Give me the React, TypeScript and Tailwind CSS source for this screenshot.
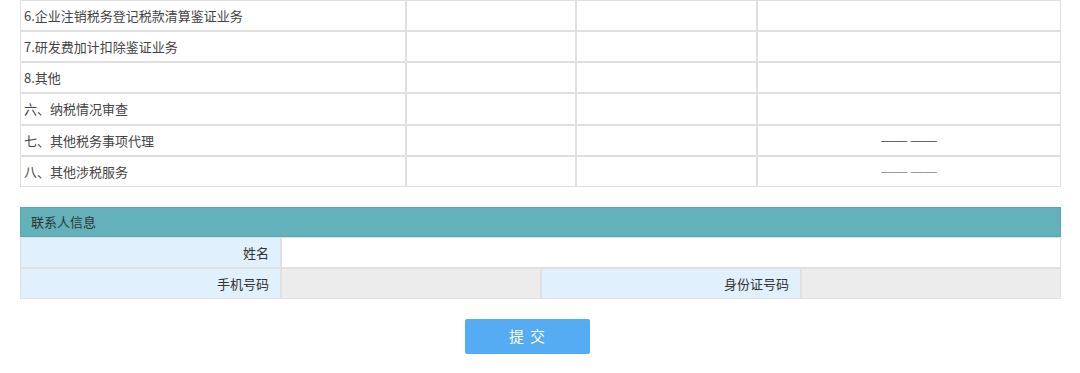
const font = "font-['Microsoft_YaHei','Noto_Sans_CJK_SC',sans-serif]";

type Row = { label: string; dash?: "dark" | "light" };

const rows: Row[] = [
  { label: "6.企业注销税务登记税款清算鉴证业务" },
  { label: "7.研发费加计扣除鉴证业务" },
  { label: "8.其他" },
  { label: "六、纳税情况审查" },
  { label: "七、其他税务事项代理", dash: "dark" },
  { label: "八、其他涉税服务", dash: "light" },
];

const cell = "border border-[#e0e0e0] p-0";

const App = () => {
  return (
    <div className={`w-[1080px] h-[373px] bg-white ${font} text-[13px] text-[#444] overflow-hidden`}>
      <div className="px-5">
        <table className="table-fixed w-[1041px] border-separate border-spacing-0">
          <colgroup>
            <col className="w-[386px]" />
            <col className="w-[170px]" />
            <col className="w-[181px]" />
            <col className="w-[304px]" />
          </colgroup>
          <tbody>
            {rows.map((row, i) => (
              <tr key={i} className={i === 3 ? "h-[32px]" : "h-[31px]"}>
                <td className={`${cell} pl-[3px] leading-none pb-[1px]`}>{row.label}</td>
                <td className={cell} />
                <td className={cell} />
                <td className={`${cell} text-center`}>
                  {row.dash && (
                    <span
                      className={`font-['Liberation_Sans',sans-serif] ${
                        row.dash === "dark" ? "text-[#666]" : "text-[#999]"
                      }`}
                    >
                      —— ——
                    </span>
                  )}
                </td>
              </tr>
            ))}
          </tbody>
        </table>

        <table className="table-fixed w-[1041px] mt-[20px] border-separate border-spacing-0">
          <colgroup>
            <col className="w-[261px]" />
            <col className="w-[260px]" />
            <col className="w-[260px]" />
            <col className="w-[260px]" />
          </colgroup>
          <tbody>
            <tr className="h-[30px]">
              <td colSpan={4} className="bg-[#63b1bb] border border-[#5aa7b1] pl-[10px] text-[#333]">
                联系人信息
              </td>
            </tr>
            <tr className="h-[31px]">
              <td className={`${cell} bg-[#e1f0fd] text-right pr-[11px] text-[#333]`}>姓名</td>
              <td colSpan={3} className={`${cell} bg-white`} />
            </tr>
            <tr className="h-[31px]">
              <td className={`${cell} bg-[#e1f0fd] text-right pr-[11px] text-[#333]`}>手机号码</td>
              <td className={`${cell} bg-[#ececec]`} />
              <td className={`${cell} bg-[#e1f0fd] text-right pr-[11px] text-[#333]`}>身份证号码</td>
              <td className={`${cell} bg-[#ececec]`} />
            </tr>
          </tbody>
        </table>

        <div className="flex justify-center mt-[20px] pr-[26px]">
          <button className="w-[125px] h-[35px] rounded-[2px] bg-[#55acf3] text-white text-[15px] tracking-[6px] pl-[6px]">
            提交
          </button>
        </div>
      </div>
    </div>
  );
};

export default App;
